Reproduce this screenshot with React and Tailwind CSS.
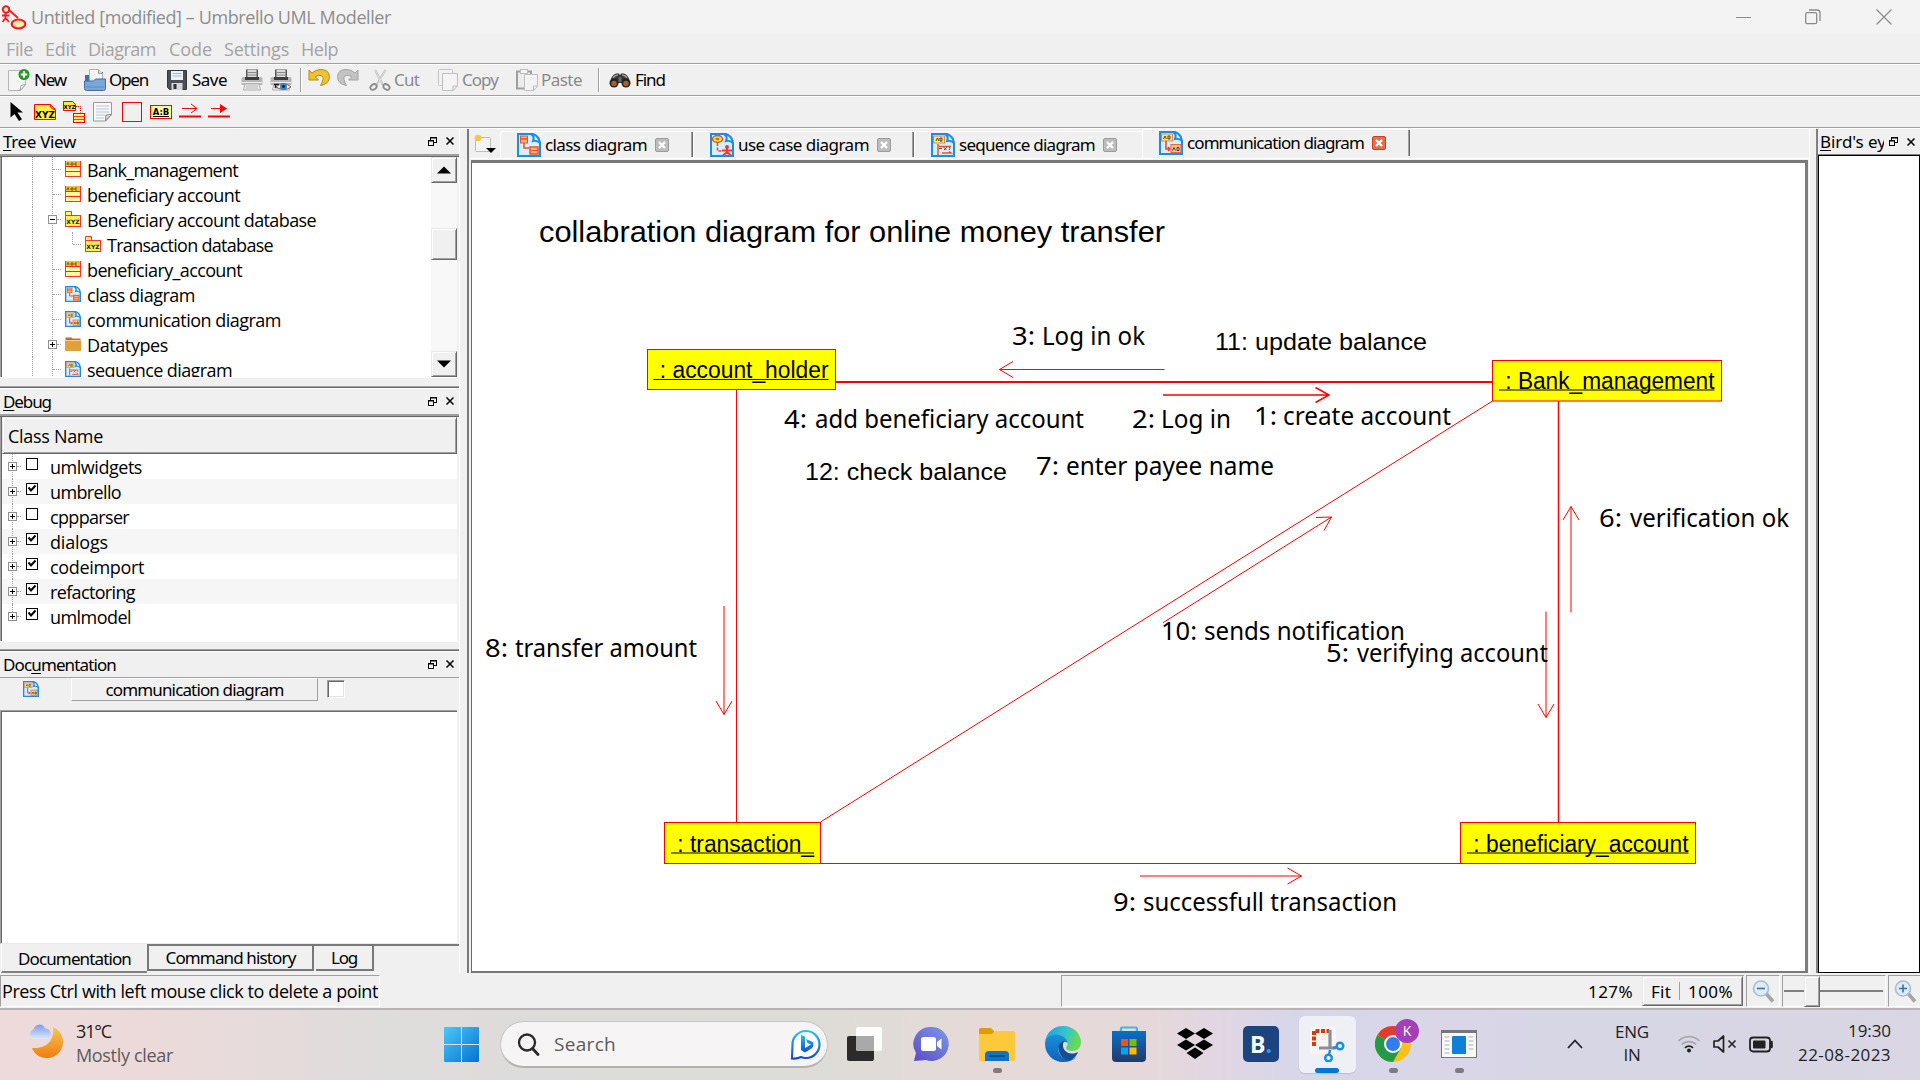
import React, { useLayoutEffect, useRef, useState } from "react";

const UI = "font-['Noto_Sans',sans-serif] text-[17px]";
const SEGOE = "font-['Open_Sans',sans-serif] text-[18px]";

/* Single-line label whose tracking is adjusted so that it fills a given width. */
function T({ w, className = "", children }) {
  const ref = useRef(null);
  const [ls, setLs] = useState(0);
  useLayoutEffect(() => {
    const n = ref.current.textContent.length;
    setLs((w - ref.current.getBoundingClientRect().width) / n);
  }, [w]);
  return (
    <span className={`shrink-0 whitespace-pre ${className}`}>
      <span ref={ref} className="inline-block" style={{ letterSpacing: `${ls}px` }}>{children}</span>
    </span>
  );
}

function Svg({ s = 22, vb = "0 0 22 22", className = "", children }) {
  return (
    <svg width={s} height={s} viewBox={vb} className={`block shrink-0 ${className}`} fill="none">
      {children}
    </svg>
  );
}

/* ---------- toolbar icons ---------- */
const NewIcon = () => (
  <Svg>
    <path d="M.5 1.500h17v14l-5 6H.5z" fill="#f4f4f4" stroke="#b5b5b5" />
    <path d="M12 21.500l1-5 4.500-1z" fill="#fff" stroke="#a5a5a5" />
    <circle cx="16" cy="5.500" r="5.500" fill="#1d9a1d" />
    <path d="M16 2.200v6.600M12.700 5.500h6.600" stroke="#fff" strokeWidth="2.200" />
  </Svg>
);
const OpenIcon = () => (
  <Svg>
    <path d="M1 6h4V3h14v15H1z" fill="#3f6fa8" />
    <path d="M5.500 .5h9l4 4V13h-13z" fill="#f4f4f4" stroke="#b0b0b0" />
    <path d="M14.500 .5v4h4" fill="#ddd" stroke="#999" />
    <path d="M.5 12h9l2-2h10v9.500q0 2-2 2h-17q-2 0-2-2z" fill="#7ba6d8" stroke="#3f6da6" />
    <path d="M2 18h18" stroke="#5b8cc6" />
  </Svg>
);
const SaveIcon = () => (
  <Svg>
    <path d="M1.500 1.500h19v19h-17l-2-2z" fill="#4b4f55" stroke="#33363b" />
    <rect x="5" y="2" width="12" height="9" fill="#eef2f8" />
    <path d="M6.500 4.500h9M6.500 7h9" stroke="#a9b8cc" />
    <rect x="5.500" y="14" width="11" height="7" fill="#d5d5d5" />
    <rect x="7.500" y="15" width="3" height="5" fill="#2e3136" />
  </Svg>
);
const PrintIcon = ({ eye }) => (
  <Svg>
    <rect x="5" y=".5" width="12" height="8" fill="#555" />
    <path d="M6.500 1h9v7h-9z" fill="#dcdcdc" />
    <path d="M6.500 3.500h9M6.500 6h9" stroke="#888" />
    <rect x=".5" y="8" width="21" height="8" rx="1.500" fill="#b5b5b5" />
    <rect x="4" y="8" width="14" height="3" fill="#3d3d3d" />
    <path d="M1 13.500h20" stroke="#eee" />
    <path d="M4 15h14l1.500 6h-17z" fill="#fafafa" stroke="#aaa" />
    <path d="M5 17h12M4.500 19h13" stroke="#aaa" />
    {eye && (
      <>
        <path d="M4 15.500h5M5.500 15v4" stroke="#222" strokeWidth="1.500" />
        <path d="M6 18q7-7 15 0q-7 5-15 0z" fill="#fff" stroke="#7d5a3e" />
        <circle cx="13.500" cy="17.500" r="3.500" fill="#3b83c5" />
        <circle cx="13.500" cy="17.500" r="1.400" fill="#123" />
      </>
    )}
  </Svg>
);
const UndoIcon = ({ redo }) => (
  <Svg className={redo ? "-scale-x-100" : ""}>
    <path d="M1 2v10h9.500l-3.300-3.300q4-2.700 6.800-.7t-1.500 9.500q9-1.500 9-9Q21 1.500 13 1.500q-5.500 0-9 3.500z" fill={redo ? "#c3c3c3" : "#f0c22e"} stroke={redo ? "#a2a2a2" : "#b98a12"} strokeLinejoin="round" />
  </Svg>
);
const CutIcon = () => (
  <Svg>
    <path d="M6 1l8 15M16.500 1L7.500 16" stroke="#b9b9b9" strokeWidth="2" />
    <path d="M6 1l7.500 14M16.500 1L8.500 15" stroke="#efefef" strokeWidth=".7" />
    <ellipse cx="4.500" cy="18" rx="3.300" ry="2.500" stroke="#8a8a8a" strokeWidth="1.800" transform="rotate(-35 4.500 18)" />
    <ellipse cx="17.500" cy="18" rx="3.300" ry="2.500" stroke="#8a8a8a" strokeWidth="1.800" transform="rotate(35 17.500 18)" />
  </Svg>
);
const CopyIcon = () => (
  <Svg>
    <rect x="1.500" y=".5" width="14" height="16" rx="1" fill="#f2f2f2" stroke="#c6c6c6" />
    <path d="M5.500 4.500h15v12l-4.500 5H5.500z" fill="#f4f4f4" stroke="#c0c0c0" />
    <path d="M16 21.500v-4.500h4.500z" fill="#fff" stroke="#bbb" />
  </Svg>
);
const PasteIcon = () => (
  <Svg>
    <path d="M1 2.500h14v17H1z" fill="#ececec" stroke="#9f9f9f" strokeWidth="2" />
    <rect x="4.500" y=".5" width="7" height="4" fill="#f5f5f5" stroke="#bdbdbd" />
    <path d="M8.500 5.500h13v11l-4 5h-9z" fill="#f3f3f3" stroke="#c0c0c0" />
    <path d="M17.500 21.500v-4.500h4z" fill="#fff" stroke="#b5b5b5" />
  </Svg>
);
const FindIcon = () => (
  <Svg>
    <path d="M1 14Q2 6 7 4.500h3l1 2 1-2h3Q20 6 21 14z" fill="#333" />
    <path d="M4 9q2-3 5-3M13 6q3 0 5 3" stroke="#999" strokeWidth="1.500" />
    <circle cx="5" cy="14" r="4.500" fill="#222" />
    <circle cx="17" cy="14" r="4.500" fill="#222" />
    <circle cx="5" cy="14.500" r="2.800" fill="#a65f28" />
    <circle cx="17" cy="14.500" r="2.800" fill="#a65f28" />
    <rect x="9.500" y="8" width="3" height="5" fill="#666" />
  </Svg>
);

function ToolSep({ className }) {
  return <div className={`h-6 w-[2px] border-l border-r border-l-[#a0a0a0] border-r-white ${className}`} />;
}

function Toolbar() {
  return (
    <div className={`flex h-[30px] items-center pl-2 text-black ${UI}`}>
      <NewIcon />
      <T w={32} className="ml-[4px]">New</T>
      <div className="w-[18px]" />
      <OpenIcon />
      <T w={39} className="ml-[3px]">Open</T>
      <div className="w-[18px]" />
      <SaveIcon />
      <T w={35} className="ml-1">Save</T>
      <div className="w-[14px]" />
      <PrintIcon />
      <div className="w-[7px]" />
      <PrintIcon eye />
      <ToolSep className="ml-2" />
      <div className="flex w-[67px] gap-[7px] pb-[3px] pl-[6px]">
        <UndoIcon />
        <UndoIcon redo />
      </div>
      <CutIcon />
      <T w={25} className="ml-[3px] text-[#8a8a8a]">Cut</T>
      <div className="w-[18px]" />
      <CopyIcon />
      <T w={36} className="ml-[3px] text-[#8a8a8a]">Copy</T>
      <div className="w-[18px]" />
      <PasteIcon />
      <T w={41} className="ml-[3px] text-[#8a8a8a]">Paste</T>
      <ToolSep className="ml-[16px]" />
      <div className="w-[9px]" />
      <FindIcon />
      <T w={30} className="ml-[4px]">Find</T>
    </div>
  );
}

function DrawBar() {
  return (
    <div className="flex h-[30px] items-center pl-2">
      <Svg>
        <path d="M2.500 1v15.500l4-3.500 4.500 7 3-1.800-4.500-6.700h5.500z" fill="#000" />
      </Svg>
      <Svg className="ml-1">
        <path d="M.5 3.500h16l5 5v10H.5z" fill="#fff04a" stroke="#f00" />
        <path d="M16 3q0 5 5 5.500" stroke="#f00" fill="#f90" />
        <text x="11" y="17" textAnchor="middle" fontSize="9" fontWeight="bold" fill="#000" fontFamily="DejaVu Sans">XYZ</text>
      </Svg>
      <Svg className="ml-[7px]">
        <path d="M.5 .5h9l3 3v6H.5z" fill="#ffe94a" stroke="#f00" />
        <text x="6.500" y="8" textAnchor="middle" fontSize="5.500" fontWeight="bold" fill="#000" fontFamily="DejaVu Sans">XYZ</text>
        <path d="M13 5.500h4.500v6" stroke="#f00" strokeDasharray="1 1" />
        <rect x="10.500" y="12.500" width="11" height="9" fill="#ffee8a" stroke="#f00" />
        <path d="M11 15.500h10M11 18.500h10" stroke="#f40" />
      </Svg>
      <Svg className="ml-[7px]">
        <path d="M1.500 1.500h18v12l-6 6.500h-12z" fill="#f7f7f7" stroke="#999" />
        <path d="M4 5h13M4 8h13M4 11h13M4 14h9M4 17h8" stroke="#b5c5dc" />
        <path d="M13.500 20l.5-6 5.500-.5z" fill="#ddd" stroke="#888" />
      </Svg>
      <Svg className="ml-[7px]">
        <rect x="1.500" y="1.500" width="19" height="19" stroke="#f00" />
      </Svg>
      <Svg className="ml-[7px]">
        <rect x=".5" y="4.500" width="21" height="13" fill="#ffffa0" stroke="#f00" />
        <text x="11" y="14" textAnchor="middle" fontSize="8.500" fontWeight="bold" fill="#000" fontFamily="DejaVu Sans">A:B</text>
        <path d="M3 15.500h16" stroke="#000" />
      </Svg>
      <Svg className="ml-[7px]">
        <path d="M3 7.500h15M12 3l6 4.500-6 4.500" stroke="#f00" />
        <path d="M0 15.500h22" stroke="#f00" strokeWidth="2" />
      </Svg>
      <Svg className="ml-[7px]">
        <path d="M3 7.500h12" stroke="#f00" />
        <path d="M12 3l7 4.500-7 4.500z" fill="#f00" />
        <path d="M0 15.500h22" stroke="#f00" strokeWidth="2" />
      </Svg>
    </div>
  );
}

/* ---------- document type icons, drawn in a 24-unit box ---------- */
function DiagramIcon({ kind, s = 24 }) {
  return (
    <Svg s={s} vb="0 0 24 24">
      <path d="M1 1h15q6 2 7 9v13H1z" fill="#d5effc" stroke="#1b8de4" strokeWidth="2" />
      <path d="M14 1q4 2 2 7 4-1 7 2" fill="#fff" stroke="#1b8de4" strokeWidth="2" />
      {kind === "class" && (
        <>
          <rect x="3.500" y="3" width="7" height="7" fill="#ffb27a" stroke="#f0502a" />
          <path d="M3 6h8M7 10v5h5" stroke="#f0502a" strokeWidth="1.500" />
          <rect x="13" y="14" width="8" height="7" fill="#ffb27a" stroke="#f0502a" strokeWidth="1.500" />
          <path d="M13 17.500h8" stroke="#f0502a" />
        </>
      )}
      {kind === "usecase" && (
        <>
          <ellipse cx="7.500" cy="6" rx="5" ry="3.500" fill="#ffd94a" stroke="#f0502a" strokeWidth="1.500" />
          <ellipse cx="7.500" cy="6" rx="2" ry="1.200" fill="#7a9a2a" />
          <path d="M7.500 10v8h5" stroke="#f04040" strokeWidth="1.500" strokeDasharray="3 1.500" />
          <circle cx="17" cy="14" r="2" fill="#f33" />
          <path d="M17 15v4M12 17.500h10M17 19l-4 3.500M17 19l4 3.500" stroke="#f33" strokeWidth="2" />
        </>
      )}
      {kind === "sequence" && (
        <>
          <rect x="2.500" y="3" width="11" height="7" fill="#ffe27a" stroke="#f0804a" />
          <path d="M5 8l1.500-3L8 8M9 5v3h2V5z" stroke="#444" />
          <path d="M7 11v11M11 20h9l-2-1.500M8 13.500h12" stroke="#f0502a" strokeWidth="1.500" />
          <path d="M8 15.500h3M12.500 14l3 3M16 14l-3 3M18 14q2 1.500 0 3" stroke="#555" />
        </>
      )}
      {kind === "comm" && (
        <>
          <rect x="2.500" y="3" width="11" height="7" fill="#ffe27a" stroke="#f0804a" />
          <path d="M4.500 8l1.500-3L7.500 8M9 5v3h2V5z" stroke="#444" />
          <path d="M7 10v8h4M9 16l2 2-2 2" stroke="#f0402a" strokeWidth="1.500" />
          <rect x="12" y="13.500" width="10" height="8" fill="#ffc27a" stroke="#f0604a" />
          <path d="M13.500 19.500l1.500-3 1.500 3M18 16.500v3h2v-3z" stroke="#444" />
        </>
      )}
    </Svg>
  );
}
function TreeIcon({ kind }) {
  if (kind === "cls")
    return (
      <Svg s={16} vb="0 0 16 16">
        <rect x=".5" y=".5" width="15" height="15" fill="#fff9a0" stroke="#f33" />
        <rect x="1" y="0" width="14" height="5" fill="#e8c33a" />
        <path d="M2 4l1-2.500L4 4M6 2v2h2V2zM12 2h-2v2h2" stroke="#6b3d00" strokeWidth=".8" />
        <path d="M0 5.500h16M0 10.500h16" stroke="#f22" />
      </Svg>
    );
  if (kind === "pkg")
    return (
      <Svg s={16} vb="0 0 16 16">
        <path d="M.5 .5h6v4h-6z" fill="#fff27a" stroke="#f33" />
        <rect x=".5" y="4.500" width="15" height="11" fill="#fff05a" stroke="#f33" />
        <text x="8" y="13" textAnchor="middle" fontSize="6" fontWeight="bold" fill="#222" fontFamily="DejaVu Sans">XYZ</text>
      </Svg>
    );
  if (kind === "folder")
    return (
      <Svg s={16} vb="0 0 16 16">
        <path d="M.5 1.500h6l1 1h8v12H.5z" fill="#b8791c" />
        <rect x="0" y="4" width="16" height="11" rx=".5" fill="#dfa23a" />
        <path d="M0 4.500h16" stroke="#f3cd83" />
      </Svg>
    );
  return <DiagramIcon kind={kind} s={16} />;
}

/* ---------- docks ---------- */
function DockButtons() {
  return (
    <div className="flex items-center gap-[9px]">
      <Svg s={9} vb="0 0 9 9">
        <path d="M2.500 1v3M2 1h7M8.500 0v6M6 5.500h3" stroke="#000" />
        <path d="M2 .5h7" stroke="#000" />
        <rect x=".5" y="3.500" width="5" height="5" fill="#f0f0f0" stroke="#000" />
        <path d="M0 4h6" stroke="#000" />
      </Svg>
      <Svg s={8} vb="0 0 8 8">
        <path d="M.5 .5l7 7M7.500 .5l-7 7" stroke="#000" strokeWidth="1.500" />
      </Svg>
    </div>
  );
}
function DockTitle({ w, children }) {
  return (
    <div className={`flex h-[25px] items-center justify-between pl-[3px] pr-[5px] leading-[25px] text-black ${UI}`}>
      <T w={w}>{children}</T>
      <div className="-mt-[1px]"><DockButtons /></div>
    </div>
  );
}
const U = ({ children }) => <span className="underline decoration-1 underline-offset-[2px]">{children}</span>;

function DockSep() {
  return <div className="h-[3px] border-b border-t border-b-white border-t-[#a0a0a0] bg-[#696969]" />;
}
function Expander({ plus }) {
  return (
    <Svg s={9} vb="0 0 9 9">
      <rect x=".5" y=".5" width="8" height="8" fill="#fff" stroke="#909090" />
      <path d={plus ? "M2 4.500h5M4.500 2v5" : "M2 4.500h5"} stroke="#000" />
    </Svg>
  );
}
const VDots = ({ className = "" }) => <div className={`w-0 border-l border-dotted border-[#a0a0a0] ${className}`} />;
const HDots = ({ className = "" }) => <div className={`h-0 border-t border-dotted border-[#a0a0a0] ${className}`} />;

const TREE = [
  ["cls", "Bank_management", 151],
  ["cls", "beneficiary account", 153],
  ["pkg", "Beneficiary account database", 229, "-"],
  ["pkg", "Transaction database", 166, "n"],
  ["cls", "beneficiary_account", 155],
  ["class", "class diagram", 108],
  ["comm", "communication diagram", 194],
  ["folder", "Datatypes", 81, "+"],
  ["sequence", "sequence diagram", 145],
];

function TreeRow({ kind, label, w, mode }) {
  return (
    <div className="flex h-[25px] shrink-0">
      <VDots className="ml-[30px]" />
      <VDots className="ml-[19px]" />
      {mode === "n" ? (
        <>
          <VDots className="ml-[19px] h-[12px]" />
          <HDots className="mt-[12px] w-[8px]" />
          <div className="w-[4px]" />
        </>
      ) : mode ? (
        <>
          <div className="-ml-[5px] mt-2"><Expander plus={mode === "+"} /></div>
          <HDots className="mt-[12px] w-[4px]" />
          <div className="w-[4px]" />
        </>
      ) : (
        <>
          <HDots className="mt-[12px] w-[8px]" />
          <div className="w-[4px]" />
        </>
      )}
      <div className="mt-1"><TreeIcon kind={kind} /></div>
      <T w={w} className={`ml-[6px] leading-[27px] text-black ${SEGOE}`}>{label}</T>
    </div>
  );
}

const bevel = "border border-b-[#696969] border-l-[#e8e8e8] border-r-[#696969] border-t-[#e8e8e8] shadow-[inset_1px_1px_0_#fff,inset_-1px_-1px_0_#a0a0a0] bg-[#f0f0f0]";
const sunken = "border-l border-[#a0a0a0] shadow-[inset_1px_0_0_#696969]";

function TreeDock() {
  return (
    <>
      <DockTitle w={73}><U>T</U>ree View</DockTitle>
      <div className="h-[3px] border-b border-b-[#696969] bg-[#a0a0a0]" />
      <div className={`mr-[2px] flex h-[220px] overflow-hidden bg-white pl-[1px] ${sunken}`}>
        <div className="flex h-full flex-1 flex-col overflow-hidden">
          {TREE.map(([k, l, w, m]) => <TreeRow key={l} kind={k} label={l} w={w} mode={m} />)}
        </div>
        <div className="flex w-[26px] flex-col bg-[#f8f8f8]">
          <div className={`flex h-[26px] items-center justify-center ${bevel}`}>
            <Svg s={14} vb="0 0 14 14"><path d="M0 10.500l7-7 7 7z" fill="#000" /></Svg>
          </div>
          <div className={`mt-[45px] h-[32px] ${bevel}`} />
          <div className={`mt-auto flex h-[26px] items-center justify-center ${bevel}`}>
            <Svg s={14} vb="0 0 14 14"><path d="M0 3.500l7 7 7-7z" fill="#000" /></Svg>
          </div>
        </div>
      </div>
      <div className="h-[9px] border-t border-white" />
    </>
  );
}

const DEBUG = [
  ["umlwidgets", 92, 0],
  ["umbrello", 71, 1],
  ["cppparser", 79, 0],
  ["dialogs", 58, 1],
  ["codeimport", 94, 1],
  ["refactoring", 85, 1],
  ["umlmodel", 81, 1],
];
function DebugDock() {
  return (
    <>
      <DockTitle w={48}><U>D</U>ebug</DockTitle>
      <div className="h-[3px] border-b border-b-[#696969] bg-[#a0a0a0]" />
      <div className={`mr-[2px] h-[224px] bg-white pl-[1px] ${sunken}`}>
        <div className={`h-[37px] pl-[5px] text-black ${bevel} ${SEGOE}`}>
          <T w={95} className="leading-[37px]">Class Name</T>
        </div>
        {DEBUG.map(([l, w, on], i) => (
          <div key={l} className={`flex h-[25px] ${i % 2 ? "bg-[#f6f6f6]" : "bg-white"}`}>
            <VDots className={`ml-[10px] ${i === 6 ? "h-[12px]" : ""}`} />
            <div className="-ml-[5px] mt-2"><Expander plus /></div>
            <HDots className="mt-[12px] w-[4px]" />
            <div className="ml-[5px] mt-1">
              <Svg s={12} vb="0 0 12 12">
                <rect x=".5" y=".5" width="11" height="11" fill="#fff" stroke="#000" />
                {on ? <path d="M2.500 4.500l2.500 3 4.500-5" stroke="#000" strokeWidth="2" /> : null}
              </Svg>
            </div>
            <T w={w} className={`ml-[12px] leading-[27px] text-black ${SEGOE}`}>{l}</T>
          </div>
        ))}
      </div>
      <div className="h-[8px] border-t border-white" />
    </>
  );
}

function DocDock() {
  return (
    <>
      <DockTitle w={113}>Doc<U>u</U>mentation</DockTitle>
      <div className={`flex h-[33px] border-t border-[#a0a0a0] pl-[23px] text-black ${UI}`}>
        <div className="mt-[3px]"><DiagramIcon kind="comm" s={16} /></div>
        <div className="ml-[32px] flex h-[23px] w-[247px] justify-center border border-b-[#a0a0a0] border-l-white border-r-[#a0a0a0] border-t-white">
          <T w={178} className="-mt-[1px] leading-[23px]">communication diagram</T>
        </div>
        <div className="ml-[9px] mt-[2px] h-[18px] w-[18px] border border-b-white border-l-[#a0a0a0] border-r-white border-t-[#a0a0a0] bg-white shadow-[inset_1px_1px_0_#696969,inset_-1px_-1px_0_#e3e3e3]" />
      </div>
      <div className="mr-[2px] h-[234px] border-b border-l border-t border-b-[#e8e8e8] border-l-[#a0a0a0] border-t-[#a0a0a0] bg-white shadow-[inset_1px_1px_0_#696969]" />
      <div className={`flex h-[29px] text-black ${UI}`}>
        <div className="ml-[1px] flex h-[29px] w-[146px] border-b-2 border-b-[#808080] border-l border-l-white pl-[16px]">
          <T w={113} className="leading-[29px]">Documentation</T>
        </div>
        <div className="flex flex-1 border-t-2 border-[#787878]">
          <div className="flex h-[25px] w-[167px] justify-center border-2 border-t-0 border-b-[#787878] border-l-[#787878] border-r-[#787878]">
            <T w={130} className="leading-[24px]">Command history</T>
          </div>
          <div className="ml-[2px] flex h-[25px] w-[58px] justify-center border-b-2 border-r-2 border-[#787878]">
            <T w={26} className="leading-[24px]">Log</T>
          </div>
        </div>
      </div>
    </>
  );
}

/* ---------- central area ---------- */
function CloseBox({ on }) {
  return (
    <Svg s={14} vb="0 0 14 14">
      <rect x=".5" y=".5" width="13" height="13" rx="1.500" fill={on ? "#e2714b" : "#bdbdbd"} stroke={on ? "#d03a24" : "#9c9c9c"} />
      <path d="M4 4l6 6M10 4l-6 6" stroke="#fff" strokeWidth="2.300" />
    </Svg>
  );
}
function Tab({ kind, label, w, width, on, sep = true }) {
  return (
    <div className={`flex shrink-0 items-center rounded-tl-[3px] border-l border-t border-white text-black ${UI} ${width} ${on ? "h-[29px] pb-[2px]" : "h-[27px] pb-[1px]"}`}>
      <div className="ml-[16px]"><DiagramIcon kind={kind} /></div>
      <T w={w} className="ml-1">{label}</T>
      <div className="ml-2"><CloseBox on={on} /></div>
      {sep && <div className="ml-auto h-full w-[2px] border-l border-[#a0a0a0] bg-[#696969]" />}
    </div>
  );
}

const NODES = [
  [647.5, 349.5, 188, 40, " : account_holder", 653.5, 175, 378],
  [1492.5, 360.5, 229, 40.5, " : Bank_management", 1499, 215.5, 388.5],
  [664.5, 822.5, 156, 41, " : transaction_", 671, 143, 851.5],
  [1460.5, 822.5, 235, 41, " : beneficiary_account", 1467, 221.5, 851.5],
];
/* number, text, x of number, x of text, right edge, baseline */
const LABELS = [
  ["3:", "Log in ok", 1012, 1042, 1145, 344.5],
  ["4:", "add beneficiary account", 784, 815, 1084, 428],
  ["2:", "Log in", 1132, 1161, 1231, 428],
  ["1:", "create account", 1254, 1283, 1451, 425],
  ["7:", "enter payee name", 1036, 1066, 1274, 475],
  ["6:", "verification ok", 1599, 1630, 1789, 526.5],
  ["10:", "sends notification", 1161, 1204, 1405, 640],
  ["5:", "verifying account", 1326, 1357, 1548, 661.5],
  ["8:", "transfer amount", 485, 515, 697, 657],
  ["9:", "successfull transaction", 1113, 1143, 1397, 911],
];
const ARIAL_LABELS = [
  ["11: update balance", 1215, 212, 350],
  ["12: check balance", 805, 202, 480],
];
const glyphs = { lengthAdjust: "spacingAndGlyphs" };

function Canvas() {
  return (
    <svg width="1333" height="806" viewBox="472 163 1333 806" fill="none" className="block">
      <g stroke="#f00" strokeWidth="1">
        <path d="M835.500 382H1492.500" strokeWidth="2" />
        <path d="M736.500 390V822" />
        <path d="M1492.500 401L820.500 822" />
        <path d="M1558.500 401V822" strokeWidth="1.500" />
        <path d="M820 863.500H1461" />
        <path d="M1164.500 369.500H999.500M1013 361.500l-13.500 8 13.500 8" />
        <path d="M1163 395H1329M1315.500 387.500l13.500 7.500-13.500 7.500" strokeWidth="1.500" />
        <path d="M724 606V714.500M716 701l8 13.500 8-13.500" />
        <path d="M1571 612.500V506.500M1563 520l8-13.500 8 13.500" />
        <path d="M1546 611.500V717.500M1538 704l8 13.500 8-13.500" />
        <path d="M1163 622.700L1331.500 517M1316 517.500l15.500-.5-7.500 13.500" />
        <path d="M1140 876H1301.500M1287.500 868l14 8-14 8" />
      </g>
      {NODES.map(([x, y, w, h, t, tx, tw, by]) => (
        <g key={t}>
          <rect x={x} y={y} width={w} height={h} fill="#ff0" stroke="#f00" />
          <text x={tx} y={by} textLength={tw} {...glyphs} fontSize="23.500" fill="#000" fontFamily="'Liberation Sans', Arial, sans-serif" className="whitespace-pre">{t}</text>
          <path d={`M${tx} ${by + 1.5}h${tw}`} stroke="#000" />
        </g>
      ))}
      <g fill="#000" fontFamily="'Liberation Sans', Arial, sans-serif">
        <text x="539" y="241.500" textLength="626" {...glyphs} fontSize="29.500">collabration diagram for online money transfer</text>
        {ARIAL_LABELS.map(([t, x, w, y]) => (
          <text key={t} x={x} y={y} textLength={w} {...glyphs} fontSize="24.500">{t}</text>
        ))}
      </g>
      <g fill="#000" fontFamily="'Noto Sans', sans-serif" fontSize="25">
        {LABELS.map(([n, t, x, tx, r, y]) => (
          <text key={n} y={y}>
            <tspan x={x} textLength={n.length * 13 - 3} {...glyphs}>{n}</tspan>{" "}
            <tspan x={tx} textLength={r - tx} {...glyphs}>{t}</tspan>
          </text>
        ))}
      </g>
    </svg>
  );
}

function Center() {
  return (
    <div className="flex w-[1342px] shrink-0 flex-col border-l-2 border-[#787878] pl-[2px]">
      <div className="flex h-[29px] items-end">
        <div className="flex w-[29px] items-center pb-[3px] pl-[3px]">
          <Svg s={22}>
            <rect x="1.500" y="4.500" width="15" height="14" rx="1" fill="#f4f4f4" stroke="#bbb" />
            <circle cx="4" cy="5" r="3.300" fill="#f5c93b" />
            <path d="M12 15h10l-5 5z" fill="#000" />
          </Svg>
        </div>
        <Tab kind="class" label="class diagram" w={102} width="w-[193px]" />
        <Tab kind="usecase" label="use case diagram" w={131} width="w-[221px]" />
        <Tab kind="sequence" label="sequence diagram" w={136} width="w-[228px]" sep={false} />
        <Tab kind="comm" label="communication diagram" w={177} width="w-[268px]" on />
      </div>
      <div className="h-[2px] border-t border-white" />
      <div className="h-[813px] w-[1337px] border border-b-2 border-r-[3px] border-t-[3px] border-b-[#787878] border-l-[#696969] border-r-[#7c7c7c] border-t-[#787878] bg-white">
        <Canvas />
      </div>
    </div>
  );
}

function Birdseye() {
  return (
    <div className="flex flex-1 flex-col border-l-2 border-[#808080]">
      <div className={`flex h-[26px] items-center border-b border-[#808080] pl-[2px] leading-[25px] text-black ${UI}`}>
        <div className="w-[64px] overflow-hidden"><T w={115}><U>B</U>ird's eye view</T></div>
        <div className="ml-[5px]"><DockButtons /></div>
      </div>
      <div className="h-[818px] border border-black bg-white" />
    </div>
  );
}

function Zoomer({ plus }) {
  return (
    <Svg s={23} vb="0 0 23 23">
      <path d="M14.500 14l6.500 7.500" stroke="#a5a5a5" strokeWidth="3.500" />
      <circle cx="9" cy="8.500" r="7.500" fill="#dcebf8" stroke="#a9bccd" strokeWidth="1.600" />
      <path d={plus ? "M5 8.500h8M9 4.500v8" : "M5 8.500h8"} stroke="#3e6ea5" strokeWidth="1.600" />
    </Svg>
  );
}

function StatusBar() {
  const cell = "border-l border-t border-b border-l-[#a0a0a0] border-t-[#a0a0a0] border-b-white";
  return (
    <div className="flex h-[35px] pt-[2px] text-black">
      <div className={`h-[32px] w-[380px] border-r border-r-white pl-[1px] ${cell} ${SEGOE}`}>
        <T w={376} className="leading-[31px]">Press Ctrl with left mouse click to delete a point</T>
      </div>
      <div className="w-[681px]" />
      <div className={`flex h-[32px] w-[683px] items-center ${cell} ${UI}`}>
        <T w={45} className="ml-[526px] mt-[1px]">127%</T>
        <div className={`ml-[9px] flex h-[30px] w-[101px] items-center ${bevel}`}>
          <T w={20} className="ml-2 mt-[1px]">Fit</T>
          <div className="ml-2 h-[18px] w-[1px] bg-[#a0a0a0]" />
          <T w={45} className="ml-2 mt-[1px]">100%</T>
        </div>
      </div>
      <div className={`ml-[2px] flex h-[32px] w-[34px] items-center pl-[5px] ${cell} border-r border-r-white`}><Zoomer /></div>
      <div className={`ml-[2px] flex h-[32px] w-[104px] items-center pl-[1px] ${cell} border-r border-r-white`}>
        <div className="h-[2px] w-[20px] bg-[#808080]" />
        <div className={`h-[31px] w-[16px] ${bevel}`} />
        <div className="h-[2px] w-[63px] bg-[#808080]" />
      </div>
      <div className={`ml-[2px] flex h-[32px] flex-1 items-center pl-[5px] ${cell}`}><Zoomer plus /></div>
    </div>
  );
}

/* ---------- taskbar ---------- */
function TaskCell({ dot, active, children }) {
  return (
    <div className="flex w-[66px] shrink-0 flex-col items-center pt-[6px]">
      <div className={`flex h-[57px] w-[57px] flex-col items-center rounded-md pt-[10px] ${active ? "bg-white/60 shadow-[0_1px_1px_rgba(0,0,0,0.12)]" : ""}`}>
        <div className="h-9">{children}</div>
        {dot && <div className="mt-[6px] h-[5px] w-[9px] rounded-full bg-[#7d7a80]" />}
        {active && <div className="mt-[6px] h-[5px] w-6 rounded-full bg-[#0078d4]" />}
      </div>
    </div>
  );
}

function Taskbar() {
  return (
    <div className={`flex h-[72px] shrink-0 border-t-2 border-[#b9b2b4] bg-[linear-gradient(90deg,#eedada_0%,#ecdada_8%,#dfdcdc_20%,#dedcda_28%,#dddcd6_42%,#e6dad8_52%,#e6d8da_60%,#e0d6e4_64%,#d6d6ea_68%,#dad6e8_75%,#d6d6e4_82%,#dad6e4_100%)] ${SEGOE}`}>
      <div className="flex w-[444px] pl-[29px] pt-[2px]">
        <Svg s={35} vb="0 0 35 35" className="mt-[12px]">
          <defs>
            <linearGradient id="moon" x1="0" y1="0" x2="0" y2="1"><stop stopColor="#f6c851" /><stop offset="1" stopColor="#f07c12" /></linearGradient>
            <linearGradient id="cloud" x1="0" y1="0" x2="0" y2="1"><stop stopColor="#7d9ee8" /><stop offset="1" stopColor="#dbe7fb" /></linearGradient>
          </defs>
          <path d="M24 3c7 3 10 9 10 15 0 9-7 16-16 16-7 0-13-4-15-10 13 1 23-6 21-21z" fill="url(#moon)" />
          <path d="M5 15a5 5 0 0 1-.5-9.500A6 6 0 0 1 16 4.500a5 5 0 0 1 1 10.500z" fill="url(#cloud)" />
        </Svg>
        <div className="ml-[12px] flex flex-col pt-[7px]">
          <T w={35} className="leading-[24px] text-[#1f1d1d]">31°C</T>
          <T w={97} className="leading-[24px] text-[#5d5a5a]">Mostly clear</T>
        </div>
      </div>
      <Svg s={35} vb="0 0 35 35" className="mt-[17px]">
        <defs><linearGradient id="win" x1="0" y1="0" x2="1" y2="1"><stop stopColor="#4bc8fb" /><stop offset="1" stopColor="#0472d0" /></linearGradient></defs>
        <path d="M1 0h16v17H0V1q0-1 1-1zM18 0h16q1 0 1 1v16H18zM0 18h17v17H1q-1 0-1-1zM18 18h17v16q0 1-1 1H18z" fill="url(#win)" />
      </Svg>
      <div className="ml-[21px] mt-[11px] flex h-[47px] w-[328px] items-center rounded-full border border-b-2 border-[#c9c4c4] border-b-[#b5b0b0] bg-[#f6f4f4] pl-[16px] pr-[6px]">
        <Svg s={23} vb="0 0 23 23">
          <circle cx="10" cy="9.500" r="8" stroke="#2a2a2a" strokeWidth="2.300" />
          <path d="M15.500 15.500l5.500 6" stroke="#2a2a2a" strokeWidth="2.800" strokeLinecap="round" />
        </Svg>
        <T w={62} className="ml-[14px] text-[19px] text-[#5c5a5a]">Search</T>
        <Svg s={31} vb="0 0 31 31" className="ml-auto">
          <defs><linearGradient id="bing" x1="0" y1="0" x2="0" y2="1"><stop stopColor="#22c4ee" /><stop offset="1" stopColor="#1648d8" /></linearGradient></defs>
          <path d="M2 29.500l.5-13.500A13.500 13.500 0 1 1 16 29q-3 0-5-1-4 2-9 1.500z" fill="#fff" stroke="url(#bing)" strokeWidth="2.200" />
          <path d="M11 6l4 1.500V19l6-3.500-3.500-1.500-1.500-4 7 3q1.500 4-1.500 6.500L15 23.500l-4-2.500z" fill="url(#bing)" />
        </Svg>
      </div>
      <div className="ml-[4px] flex">
        <TaskCell>
          <Svg s={36} vb="0 0 36 36">
            <rect x="0" y="10" width="27" height="25" rx="2" fill="#2b2b2b" />
            <rect x="9" y="1" width="26" height="24" rx="2" fill="#fff" opacity=".9" />
            <path d="M9 10h18v15H11q-2 0-2-2z" fill="#a9a9a9" />
          </Svg>
        </TaskCell>
        <TaskCell>
          <Svg s={36} vb="0 0 36 36">
            <defs><linearGradient id="chat" x1="1" y1="0" x2="0" y2="1"><stop stopColor="#7d9ae8" /><stop offset="1" stopColor="#5a4bc4" /></linearGradient></defs>
            <path d="M18 1a17 17 0 1 1-5 33l-12 1 2-8A17 17 0 0 1 18 1z" fill="url(#chat)" />
            <rect x="8" y="11" width="15" height="14" rx="2.500" fill="#fff" />
            <path d="M24 16l4.500-3.500v11L24 20z" fill="#fff" />
          </Svg>
        </TaskCell>
        <TaskCell dot>
          <Svg s={36} vb="0 0 36 36">
            <path d="M0 4q0-2 2-2h10l3 3v4H0z" fill="#dd9c0a" />
            <path d="M0 8h13l3-3h18q2 0 2 2v26q0 2-2 2H2q-2 0-2-2z" fill="#fcc93a" />
            <path d="M6 35v-6q0-4 4-4h16q4 0 4 4v6z" fill="#1273c4" />
            <path d="M11 30h14" stroke="#0b4f92" strokeWidth="2" strokeLinecap="round" />
          </Svg>
        </TaskCell>
        <TaskCell>
          <Svg s={36} vb="0 0 36 36">
            <defs>
              <linearGradient id="eg1" x1="0" y1="0" x2="1" y2=".3"><stop stopColor="#1b9de2" /><stop offset=".6" stopColor="#35c4cf" /><stop offset="1" stopColor="#66db52" /></linearGradient>
              <linearGradient id="eg2" x1="0" y1="0" x2="0" y2="1"><stop stopColor="#1b8fdd" /><stop offset="1" stopColor="#0d62b8" /></linearGradient>
            </defs>
            <path d="M0 17C1 6 9 0 18 0c11 0 18 8 18 16 0 6-4 9-9 9-4 0-6-1.500-6-3 0-1 1.500-1.500 1.500-4C22 13 17 9 11 9 5 9 1 13 0 17z" fill="url(#eg1)" />
            <path d="M0 18C0 12 5 8.500 11 8.500c6 0 11 4 11.500 8-4-2-9 1-9 7 0 6 5 10 11 10 3 0 5-1 8-3C29 34 24 36 18 36 8 36 0 28 0 18z" fill="url(#eg2)" />
            <path d="M13.500 23c-.5-4 2-7.500 6-8-3 3-2 11 6 12.500 4 .5 6-1 7.500-1.500-1 3-3 6-8 8.500-6 0-11-5-11.500-11.500z" fill="#124f94" />
          </Svg>
        </TaskCell>
        <TaskCell>
          <Svg s={36} vb="0 0 36 36">
            <defs><linearGradient id="store" x1="0" y1="0" x2="0" y2="1"><stop stopColor="#0a6fc8" /><stop offset="1" stopColor="#243a66" /></linearGradient></defs>
            <path d="M10 7V2.500q0-1 1-1h14q1 0 1 1V7" stroke="#3fb6ee" strokeWidth="2.200" />
            <path d="M1 5h34v27q0 4-4 4H5q-4 0-4-4z" fill="url(#store)" />
            <rect x="10" y="13" width="7" height="7" fill="#f25022" />
            <rect x="18.500" y="13" width="7" height="7" fill="#7fba00" />
            <rect x="10" y="21.500" width="7" height="7" fill="#00a4ef" />
            <rect x="18.500" y="21.500" width="7" height="7" fill="#ffb900" />
          </Svg>
        </TaskCell>
        <TaskCell>
          <Svg s={36} vb="0 0 36 36">
            <path d="M9 2l9 5.500L9 13 0 7.500zM27 2l9 5.500-9 5.500-9-5.500zM9 13.500l9 5.500-9 5.500L0 19zM27 13.500l9 5.500-9 5.500-9-5.500zM18 21.500l8.500 5.500-8.500 6-8.500-6z" fill="#000" />
          </Svg>
        </TaskCell>
        <TaskCell>
          <div className="flex h-9 w-9 items-center justify-center rounded-[5px] bg-[#1c4480] font-['Open_Sans',sans-serif] text-[23px] font-bold leading-none text-white">
            B<span className="text-[#1aa5f0]">.</span>
          </div>
        </TaskCell>
        <TaskCell active>
          <Svg s={36} vb="0 0 36 36">
            <rect x="1" y="1" width="26" height="27" rx="2" fill="#f7f5f5" />
            <path d="M5 20V5h15" stroke="#d83b01" strokeWidth="4" strokeDasharray="4 1.500" />
            <path d="M21 4v19M10 22h17" stroke="#8a8f96" strokeWidth="3.200" />
            <circle cx="31" cy="20" r="3.300" stroke="#1591df" strokeWidth="2.400" />
            <circle cx="19.500" cy="32" r="3.300" stroke="#1591df" strokeWidth="2.400" />
            <path d="M24 22l4-1M21 24l-1 5" stroke="#1591df" strokeWidth="2.400" />
          </Svg>
        </TaskCell>
        <TaskCell dot>
          <div className="relative">
            <Svg s={36} vb="0 0 36 36">
              <circle cx="18" cy="18" r="18" fill="#fbc116" />
              <path d="M18 18L2.400 9A18 18 0 0 1 33.600 9H18z" fill="#e33b2e" />
              <path d="M18 18L2.400 9A18 18 0 0 0 18 36l8-14z" fill="#249a45" />
              <circle cx="18" cy="18" r="9" fill="#fff" />
              <circle cx="18" cy="18" r="7" fill="#2f7df0" />
            </Svg>
            <div className="absolute -top-[7px] left-[20px] flex h-6 w-6 items-center justify-center rounded-full bg-[#a43fb8] font-['Open_Sans',sans-serif] text-[14px] leading-none text-white">K</div>
          </div>
        </TaskCell>
        <TaskCell dot>
          <Svg s={36} vb="0 0 36 36">
            <rect x=".5" y="4.500" width="35" height="27" fill="#f8f8f8" stroke="#777" />
            <rect x="0" y="4" width="36" height="3" fill="#777" />
            <rect x="11" y="10" width="14" height="18" rx="1" fill="#127fd6" />
            <path d="M3.500 11h5M3.500 15h5M3.500 19h5M3.500 23h5M3.500 27h5M27.500 11h5M27.500 15h5M27.500 19h5M27.500 23h5" stroke="#c9c9c9" strokeWidth="1.500" />
          </Svg>
        </TaskCell>
      </div>
      <div className="flex flex-1 justify-end pr-[29px] text-[#1f1e22]">
        <Svg s={16} vb="0 0 16 16" className="mt-[26px]"><path d="M1 12l7-7.500 7 7.500" stroke="#222" strokeWidth="1.800" /></Svg>
        <div className="ml-[32px] flex flex-col items-center pt-[10px]">
          <T w={34} className="text-[17px] leading-[23px]">ENG</T>
          <T w={17} className="text-[17px] leading-[23px]">IN</T>
        </div>
        <Svg s={24} vb="0 0 24 24" className="ml-[28px] mt-[21px]">
          <path d="M1.500 10a15 15 0 0 1 21 0" stroke="#a9a8b2" strokeWidth="1.700" />
          <path d="M4.800 13.500a10.300 10.300 0 0 1 14.400 0" stroke="#a9a8b2" strokeWidth="1.700" />
          <path d="M8 16.800a5.800 5.800 0 0 1 8 0" stroke="#222" strokeWidth="1.800" />
          <circle cx="12" cy="19.500" r="2" fill="#222" />
        </Svg>
        <Svg s={24} vb="0 0 24 24" className="ml-[12px] mt-[22px]">
          <path d="M1 9h4l5.500-5v16L5 15H1z" stroke="#222" strokeWidth="1.700" strokeLinejoin="round" />
          <path d="M15.500 8.500l7 7M22.500 8.500l-7 7" stroke="#222" strokeWidth="1.600" />
        </Svg>
        <Svg s={25} vb="0 0 25 24" className="ml-[12px] mt-[22px]">
          <rect x="1" y="5" width="20" height="14" rx="3" stroke="#222" strokeWidth="1.800" />
          <rect x="4" y="8" width="12.500" height="8" rx="1" fill="#222" />
          <path d="M22.500 9.500v5" stroke="#222" strokeWidth="2.600" strokeLinecap="round" />
        </Svg>
        <div className="ml-[24px] flex flex-col items-end pt-[9px]">
          <T w={43} className="text-[17px] leading-[24px]">19:30</T>
          <T w={93} className="text-[17px] leading-[24px]">22-08-2023</T>
        </div>
      </div>
    </div>
  );
}

function TitleBar() {
  return (
    <div className={`flex h-[34px] items-center bg-[#f3f3f3] text-[#8d8d8d] ${SEGOE}`}>
      <Svg s={26} vb="0 0 26 26" className="ml-[1px]">
        <path d="M8 6l9 8" stroke="#e22" strokeWidth="2" />
        <circle cx="5" cy="5.500" r="3.200" fill="#fdd" stroke="#f01f1f" strokeWidth="2" />
        <path d="M4.500 9v6M1 11.500h7.500M4.500 14l-3 4M4.500 14l3.500 4" stroke="#f01f1f" strokeWidth="1.800" />
        <ellipse cx="17.500" cy="20" rx="6.800" ry="4.500" fill="#ffedb0" stroke="#f01f1f" strokeWidth="2.200" />
      </Svg>
      <T w={360} className="ml-1">Untitled [modified] – Umbrello UML Modeller</T>
      <div className="ml-auto flex items-center pr-[28px]">
        <Svg s={16} vb="0 0 16 16"><path d="M0 8.500h15" stroke="#8a8a8a" strokeWidth="1" /></Svg>
        <Svg s={16} vb="0 0 16 16" className="ml-[53px]">
          <rect x=".7" y="3.700" width="11" height="11" rx="1.500" stroke="#8a8a8a" strokeWidth="1.300" />
          <path d="M4 1h8q3 0 3 3v8" stroke="#8a8a8a" strokeWidth="1.300" />
        </Svg>
        <Svg s={16} vb="0 0 16 16" className="ml-[55px]"><path d="M.5 .5l15 15M15.500 .5l-15 15" stroke="#8a8a8a" strokeWidth="1.200" /></Svg>
      </div>
    </div>
  );
}

const MENU = [["File", 27, "ml-[6px]"], ["Edit", 31, "ml-[12px]"], ["Diagram", 68, "ml-[12px]"], ["Code", 43, "ml-[13px]"], ["Settings", 65, "ml-[12px]"], ["Help", 37, "ml-[12px]"]];

export default function App() {
  const rule = "border-b border-white h-[2px] bg-[#a0a0a0]";
  return (
    <div className="flex h-[1080px] w-[1920px] flex-col overflow-hidden bg-[#f0f0f0]">
      <TitleBar />
      <div className={`flex h-[29px] items-center pt-[2px] text-[#a3a3a3] ${SEGOE}`}>
        {MENU.map(([l, w, m]) => <T key={l} w={w} className={m}>{l}</T>)}
      </div>
      <div className={rule} />
      <Toolbar />
      <div className={rule} />
      <DrawBar />
      <div className={rule} />
      <div className="flex h-[844px]">
        <div className="flex w-[460px] shrink-0 flex-col border-r border-white">
          <TreeDock />
          <DockSep />
          <DebugDock />
          <DockSep />
          <DocDock />
        </div>
        <div className="w-[7px] shrink-0" />
        <Center />
        <div className="w-[7px] shrink-0 border-l border-white" />
        <Birdseye />
      </div>
      <StatusBar />
      <Taskbar />
    </div>
  );
}
